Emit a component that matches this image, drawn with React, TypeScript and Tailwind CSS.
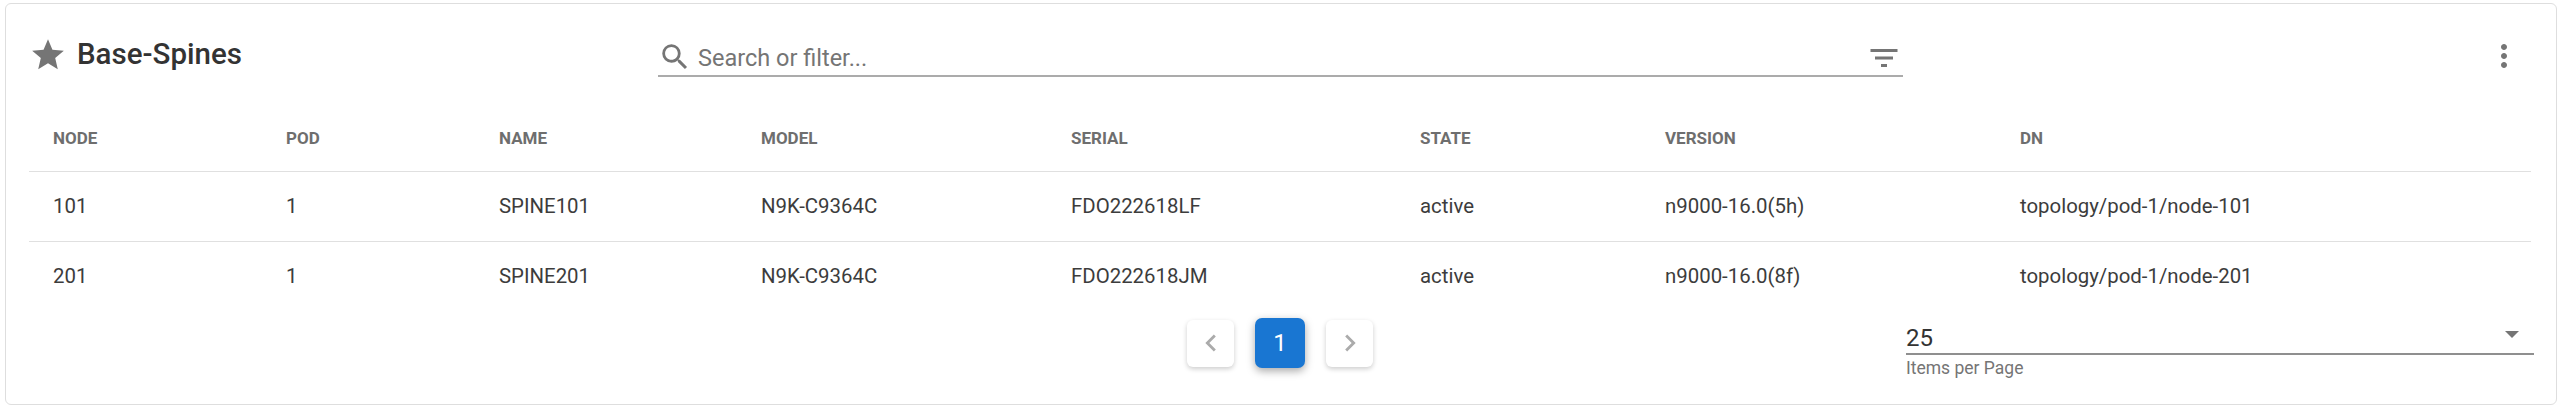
import React from "react";

const columns = ["NODE", "POD", "NAME", "MODEL", "SERIAL", "STATE", "VERSION", "DN"];

const rows = [
  ["101", "1", "SPINE101", "N9K-C9364C", "FDO222618LF", "active", "n9000-16.0(5h)", "topology/pod-1/node-101"],
  ["201", "1", "SPINE201", "N9K-C9364C", "FDO222618JM", "active", "n9000-16.0(8f)", "topology/pod-1/node-201"],
];

const colWidths = ["w-[233px]", "w-[213px]", "w-[262px]", "w-[310px]", "w-[349px]", "w-[245px]", "w-[355px]", "w-[535px]"];

const App: React.FC = () => {
  return (
    <div className="w-[2560px] h-[411px] bg-white pt-[3px] pl-[5px] pr-[3px] font-['Roboto',sans-serif] overflow-hidden">
      <div className="w-[2552px] h-[402px] border border-[#dedede] rounded-[6px] bg-white pl-[23px] pr-[23px]">
        {/* Header */}
        <div className="flex items-start h-[72px] pt-[37px]">
          <div className="flex items-center w-[629px] h-[28px]">
            <svg viewBox="0 0 24 24" className="w-[38px] h-[38px] fill-[#757575] shrink-0">
              <path d="M12 17.27 18.18 21l-1.64-7.03L22 9.24l-7.19-.61L12 2 9.19 8.63 2 9.24l5.46 4.73L5.82 21z" />
            </svg>
            <span className="ml-[10px] text-[29.5px] font-medium text-[#333333] leading-none">Base-Spines</span>
          </div>
          <div className="flex items-center w-[1245px] h-[36px] border-b-2 border-[#ababab]">
            <svg viewBox="0 0 24 24" className="w-[34px] h-[34px] -mt-[3px] fill-[#757575] shrink-0">
              <path d="M15.5 14h-.79l-.28-.27A6.471 6.471 0 0 0 16 9.5 6.5 6.5 0 1 0 9.5 16c1.61 0 3.09-.59 4.23-1.57l.27.28v.79l5 4.99L20.49 19l-4.99-5zm-6 0C7.01 14 5 11.99 5 9.5S7.01 5 9.5 5 14 7.01 14 9.5 11.99 14 9.5 14z" />
            </svg>
            <span className="ml-[6px] mt-[2px] text-[23.5px] text-[#757575] leading-none">Search or filter...</span>
            <svg viewBox="0 0 24 24" className="ml-auto mr-[1px] w-[36px] h-[36px] fill-[#757575] shrink-0">
              <path d="M10 18h4v-2h-4v2zM3 6v2h18V6H3zm3 7h12v-2H6v2z" />
            </svg>
          </div>
          <div className="ml-auto mr-[11px]">
            <svg viewBox="0 0 24 24" className="w-[36px] h-[36px] fill-[#757575] mt-[-3px]">
              <path d="M12 8c1.1 0 2-.9 2-2s-.9-2-2-2-2 .9-2 2 .9 2 2 2zm0 2c-1.1 0-2 .9-2 2s.9 2 2 2 2-.9 2-2-.9-2-2-2zm0 6c-1.1 0-2 .9-2 2s.9 2 2 2 2-.9 2-2-.9-2-2-2z" />
            </svg>
          </div>
        </div>

        {/* Table */}
        <table className="table-fixed w-[2502px] border-collapse">
          <thead>
            <tr className="h-[95px] border-b border-[#e0e0e0]">
              {columns.map((col, i) => (
                <th key={col} className={`${colWidths[i]} pl-[24px] pt-[31px] text-left text-[17px] font-bold text-[#6e6e6e]`}>
                  {col}
                </th>
              ))}
            </tr>
          </thead>
          <tbody>
            {rows.map((row) => (
              <tr key={row[0]} className="h-[70px] border-b border-[#e0e0e0] last:border-b-0">
                {row.map((cell, i) => (
                  <td key={i} className="pl-[24px] text-[20.4px] text-[#3c3c3c]">
                    {cell}
                  </td>
                ))}
              </tr>
            ))}
          </tbody>
        </table>

        {/* Footer */}
        <div className="relative flex items-start h-[91px]">
          <div className="flex items-center gap-[21px] ml-[1158px] mt-[7px]">
            <button className="w-[47px] h-[47px] rounded-[6px] bg-white shadow-[0_2px_5px_rgba(0,0,0,0.2)] flex items-center justify-center">
              <svg viewBox="0 0 24 24" className="w-[34px] h-[34px] fill-[#ababab]">
                <path d="M15.41 7.41 14 6l-6 6 6 6 1.41-1.41L10.83 12z" />
              </svg>
            </button>
            <button className="w-[50px] h-[50px] rounded-[7px] bg-[#1976d2] shadow-[0_3px_8px_rgba(0,0,0,0.35)] text-white text-[24px] flex items-center justify-center">
              1
            </button>
            <button className="w-[47px] h-[47px] rounded-[6px] bg-white shadow-[0_2px_5px_rgba(0,0,0,0.2)] flex items-center justify-center">
              <svg viewBox="0 0 24 24" className="w-[34px] h-[34px] fill-[#ababab]">
                <path d="M10 6 8.59 7.41 13.17 12l-4.58 4.59L10 18l6-6z" />
              </svg>
            </button>
          </div>
          <div className="ml-auto mr-[-1px] w-[628px] mt-[11px]">
            <div className="flex items-center h-[33px] border-b-2 border-[#8f8f8f]">
              <span className="text-[24px] text-[#333333] leading-none">25</span>
              <span className="ml-auto mr-[15px] mb-[6px] w-0 h-0 border-l-[7px] border-r-[7px] border-t-[7px] border-l-transparent border-r-transparent border-t-[#757575]"></span>
            </div>
            <div className="mt-[3px] text-[17.5px] leading-[20px] text-[#757575]">Items per Page</div>
          </div>
        </div>
      </div>
    </div>
  );
};

export default App;
